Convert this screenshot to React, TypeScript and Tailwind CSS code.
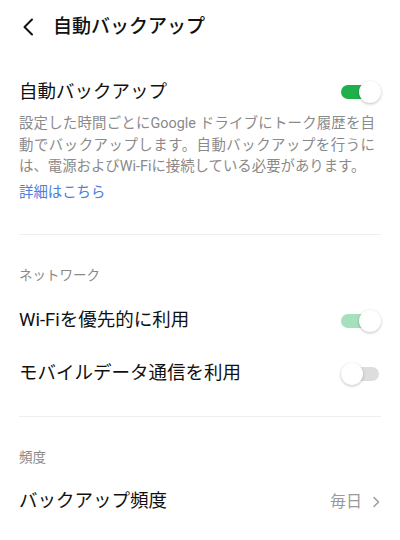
import React from 'react';

const Toggle: React.FC<{ on: boolean; track: string }> = ({ on, track }) => (
  <div className="relative w-[40px] h-[22px] shrink-0">
    <div className={`absolute left-0 top-[4px] w-[38px] h-[14px] rounded-full ${track}`} />
    <div
      className={`absolute top-0 w-[22px] h-[22px] rounded-full bg-white shadow-[0_1px_3px_rgba(0,0,0,0.25)] ${on ? 'right-0' : 'left-0'}`}
    />
  </div>
);

const App: React.FC = () => {
  return (
    <div
      className="w-[400px] h-[540px] bg-white text-[#111] overflow-hidden"
      style={{ fontFamily: 'Roboto, "Noto Sans CJK JP", sans-serif' }}
    >
      {/* Header */}
      <div className="h-[50px] flex items-center pl-[21px]">
        <svg width="14" height="20" viewBox="0 0 14 20" fill="none" className="mt-[3px]">
          <path d="M11 2.5 L3.5 10 L11 17.5" stroke="#111" strokeWidth="2" strokeLinecap="round" strokeLinejoin="round" />
        </svg>
        <h1 className="ml-[18px] pt-[3px] text-[19px] font-medium leading-none">自動バックアップ</h1>
      </div>

      <div className="px-[19px]">
        {/* Auto backup */}
        <div className="mt-[27px] h-[30px] flex items-center justify-between">
          <span className="text-[18.5px] leading-none">自動バックアップ</span>
          <Toggle on track="bg-[#1fb04c]" />
        </div>
        <p className="mt-[6px] mr-[6px] text-[14.4px] leading-[21.5px] text-[#8a8a8a] text-justify">
          設定した時間ごとにGoogle ドライブにトーク履歴を自動でバックアップします。自動バックアップを行うには、電源およびWi-Fiに接続している必要があります。
        </p>
        <div className="mt-[4.5px] text-[14.4px] leading-[21.5px] text-[#4a7ee0]">詳細はこちら</div>

        <div className="mt-[30px] h-px bg-[#eeeeee]" />

        {/* Network */}
        <div className="mt-[30px] text-[13.5px] leading-[20px] text-[#8a8a8a]">ネットワーク</div>
        <div className="mt-[21px] h-[30px] flex items-center justify-between">
          <span className="text-[18.5px] leading-none">Wi-Fiを優先的に利用</span>
          <Toggle on track="bg-[#a6e0bc]" />
        </div>
        <div className="mt-[23px] h-[30px] flex items-center justify-between">
          <span className="text-[18.5px] leading-none">モバイルデータ通信を利用</span>
          <Toggle on={false} track="bg-[#dddddd]" />
        </div>

        <div className="mt-[27px] h-px bg-[#eeeeee]" />

        {/* Frequency */}
        <div className="mt-[30px] text-[13.5px] leading-[20px] text-[#8a8a8a]">頻度</div>
        <div className="mt-[20px] h-[30px] flex items-center justify-between">
          <span className="text-[18.5px] leading-none">バックアップ頻度</span>
          <div className="flex items-center gap-[10px] text-[16px] text-[#999]">
            <span className="leading-none">毎日</span>
            <svg width="8" height="12" viewBox="0 0 8 12" fill="none" className="mr-[1px]">
              <path d="M2 1.5 L6.5 6 L2 10.5" stroke="#999" strokeWidth="1.4" strokeLinecap="round" strokeLinejoin="round" />
            </svg>
          </div>
        </div>
      </div>
    </div>
  );
};

export default App;
